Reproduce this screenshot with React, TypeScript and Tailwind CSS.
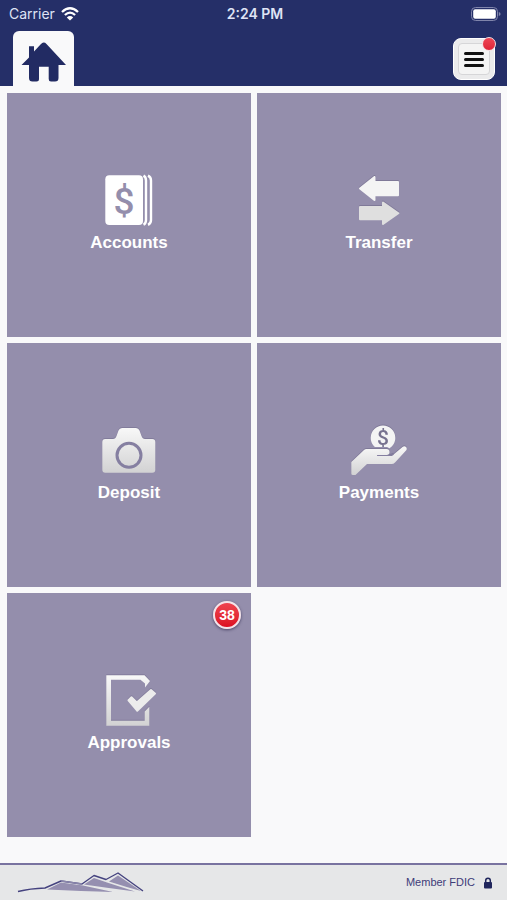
import type { ReactNode } from "react";

const silver = "url(#silver)";

function AccountsIcon() {
  return (
    <svg viewBox="0 0 64 60" className="h-15 w-16" aria-hidden="true">
      <rect x="8.3" y="4.3" width="37.7" height="49.7" rx="4" fill="#fff" />
      <path d="M46.5 4.6Q49 6 49 9.5V49Q49 52.5 46.5 53.8M51 4.6Q54 6 54 9.5V49Q54 52.5 51 53.8" fill="none" stroke="#fff" strokeWidth="2.4" />
      <text x="27" y="42.5" textAnchor="middle" fontSize="37" fontFamily="Roboto, sans-serif" fontWeight="500" fill="#948eac">$</text>
    </svg>
  );
}

function TransferIcon() {
  return (
    <svg viewBox="0 0 64 60" className="h-15 w-16 drop-shadow-[0_-1px_0_#7f7998]" aria-hidden="true">
      <g strokeLinejoin="round" strokeWidth="2">
        <path d="M13 17.5L27.5 6V11H51V24.2H27.5V29Z" fill="#f4f4f4" stroke="#f4f4f4" />
        <path d="M13 36H36V31.5L51.3 42.3L36 53V48.2H13Z" fill="#dfdfdf" stroke="#dfdfdf" />
      </g>
    </svg>
  );
}

function CameraIcon() {
  return (
    <svg viewBox="0 0 64 60" className="h-15 w-16 drop-shadow-[0_-1px_0_#827c9b]" aria-hidden="true">
      <path d="M8.3 18H16Q18.500 18 19.500 15L21.500 9.5Q22.500 7 25 7H39Q41.500 7 42.500 9.5L44.500 15Q45.500 18 48 18H55.3Q58.3 18 58.3 21V48.7Q58.3 51.7 55.3 51.7H8.3Q5.3 51.7 5.3 48.7V21Q5.3 18 8.3 18Z" fill={silver} />
      <circle cx="32" cy="34.3" r="12" fill="none" stroke="#857fa1" strokeWidth="3" />
    </svg>
  );
}

function PaymentsIcon() {
  return (
    <svg viewBox="0 0 64 60" className="h-15 w-16 drop-shadow-[0_-1px_0_#7f7998]" aria-hidden="true">
      <path d="M27 25.3A12.3 12.3 0 1 1 45 25.3L42.5 27.3L40 26H28Z" fill="#f4f4f4" />
      <text x="36" y="24" textAnchor="middle" fontSize="21" fontFamily="Roboto, sans-serif" fontWeight="500" fill="#77728f">$</text>
      <path d="M4.3 41L17 29Q18 28 19.5 28H39.5Q42.5 28 42.5 31T39.5 34H46L55.5 26Q57.5 24.5 59 26T59 29.5L48 41.5Q46.5 43 44.5 43H20L9 53.5Q8.5 54 7.5 54H6Q4.3 54 4.3 52.5Z" fill={silver} />
      <path d="M30.5 34.5H42.5Q45 34.5 46 33.5" stroke="#857fa1" strokeWidth="1.2" strokeLinecap="round" fill="none" />
    </svg>
  );
}

function ApprovalsIcon() {
  return (
    <svg viewBox="0 0 64 60" className="h-15 w-16 drop-shadow-[0_-1px_0_#827c9b]" aria-hidden="true">
      <path d="M9.3 4.3H47.5L53 10L48 16.5V12.500L43.5 8.8H14V49.8H47.7V40.5L52.3 35.7V54.7H9.3Z" fill={silver} />
      <path d="M31.5 29.3L34.5 26.3L39.8 31.5L54 19L58 22.5L40.2 39.7Z" fill="#ececec" stroke="#ececec" strokeWidth="2" strokeLinejoin="round" />
    </svg>
  );
}

function Tile({ label, icon, badge }: { label: string; icon: ReactNode; badge?: number }) {
  return (
    <button type="button" className="relative flex aspect-square flex-col items-center justify-center bg-[#948eac] pb-1">
      {icon}
      <span className="text-[17px] leading-6 font-bold text-white">{label}</span>
      {badge !== undefined && (
        <span className="absolute top-2 right-2.5 flex size-7 items-center justify-center rounded-full border-2 border-[#f3e3e9] bg-linear-to-b from-[#ee4350] to-[#dc0b20] text-[14px] font-bold text-white shadow-[0_1px_3px_#4b4566]">
          {badge}
        </span>
      )}
    </button>
  );
}

function StatusBar() {
  return (
    <div className="grid h-[27px] grid-cols-3 items-center pr-1.5 pl-[9px] font-['Inter',sans-serif] text-[14px] text-[#dfe3f5]">
      <div className="flex items-center gap-1.5">
        <span>Carrier</span>
        <svg viewBox="0 0 18 14" className="h-3.5 w-[18px]" role="img" aria-label="Wi-Fi">
          <path d="M1 5Q9 -2.5 17 5M3.9 8Q9 3.3 14.1 8" fill="none" stroke="#fff" strokeWidth="2.3" />
          <path d="M5.8 10.4Q9 7.6 12.2 10.4L9 13.6Z" fill="#fff" />
        </svg>
      </div>
      <span className="text-center font-semibold">2:24 PM</span>
      <svg viewBox="0 0 30 14" className="h-3.5 w-[30px] justify-self-end" role="img" aria-label="Battery full">
        <rect x="0.5" y="0.5" width="26" height="13" rx="4" fill="none" stroke="#8085ab" />
        <rect x="2.2" y="2.2" width="22.6" height="9.6" rx="2" fill="#fff" />
        <path d="M27.8 5Q29.6 5.5 29.6 7T27.8 9Z" fill="#8085ab" />
      </svg>
    </div>
  );
}

export default function App() {
  return (
    <div className="flex min-h-screen flex-col bg-[#f9f9fa] font-['Liberation_Sans',Arial,sans-serif]">
      <svg className="absolute size-0" aria-hidden="true">
        <defs>
          <linearGradient id="silver" x1="0" y1="0" x2="0" y2="1">
            <stop offset="0" stopColor="#f8f8f8" />
            <stop offset="1" stopColor="#d2d2d3" />
          </linearGradient>
        </defs>
      </svg>
      <header className="bg-[#252f68]">
        <StatusBar />
        <div className="flex items-end justify-between pt-1 pr-3 pl-[13px]">
          <button type="button" aria-label="Home" className="rounded-t-md bg-[#f9f9fa]">
            <svg viewBox="13 31 61 55" className="h-[55px] w-[61px]" aria-hidden="true">
              <path d="M21.5 65L29 57.5V46.2H34V51.5L40.5 44.5Q43.5 41 46.5 44L66 65H58.5V78Q58.5 81.5 55 81.5H51Q48.7 81.5 48.7 79V66.7H39V79Q39 81.5 36.5 81.5H32.5Q29 81.5 29 78V65Z" fill="#222b63" />
            </svg>
          </button>
          <button type="button" aria-label="Menu" className="relative mb-1.5 flex size-[42px] items-center justify-center rounded-lg border border-white bg-[#ebebec] p-1">
            <span className="flex size-8 flex-col items-center justify-center gap-[3px] rounded-sm border border-[#d6d6d8] bg-[#f4f4f4]">
              <span className="h-[3px] w-5 rounded-full bg-[#111]" />
              <span className="h-[3px] w-5 rounded-full bg-[#111]" />
              <span className="h-[3px] w-5 rounded-full bg-[#111]" />
            </span>
            <span className="absolute -top-0.5 -right-0.5 size-3.5 rounded-full border border-[#f5dfe3] bg-linear-to-b from-[#ee4555] to-[#df2338]" />
          </button>
        </div>
      </header>

      <main className="grid flex-1 grid-cols-2 content-start gap-1.5 pt-[7px] pr-1.5 pb-[26px] pl-[7px]">
        <Tile label="Accounts" icon={<AccountsIcon />} />
        <Tile label="Transfer" icon={<TransferIcon />} />
        <Tile label="Deposit" icon={<CameraIcon />} />
        <Tile label="Payments" icon={<PaymentsIcon />} />
        <Tile label="Approvals" icon={<ApprovalsIcon />} badge={38} />
      </main>

      <footer className="flex h-[37px] items-center justify-between border-t-2 border-[#7973a0] bg-[#e6e7e8] pr-3.5 pl-4">
        <svg viewBox="16 871 130 24" className="h-6 w-[130px]" role="img" aria-label="Mountain range">
          <path d="M47 889.5L61 882.5L83 885.5L113 892Q82 891 47 889.5ZM84 884.5L94 878L107 882.5L135 891.5Q108 888 84 884.5ZM109 881.5L118 875.5L141 891Q126 887 109 881.5Z" fill="#958fb0" />
          <path d="M18 891.5Q30 888.5 45 888L61 881L82 884L94 875.5L106 879.5L118 873L143 891" fill="none" stroke="#45437f" strokeWidth="1.4" strokeLinejoin="round" />
          <path d="M61 881L82 884" stroke="#8a86ab" strokeWidth="1.4" />
        </svg>
        <div className="flex items-center gap-2 text-[11px] text-[#3e3c78]">
          <span>Member FDIC</span>
          <svg viewBox="0 0 10 12" className="h-3 w-2.5" role="img" aria-label="Secure">
            <rect x="1" y="5" width="8" height="6.5" rx="1" fill="#20265c" />
            <path d="M2.7 5.5V3.5A2.3 2.3 0 0 1 7.3 3.5V5.5" fill="none" stroke="#20265c" strokeWidth="1.5" />
          </svg>
        </div>
      </footer>
    </div>
  );
}
